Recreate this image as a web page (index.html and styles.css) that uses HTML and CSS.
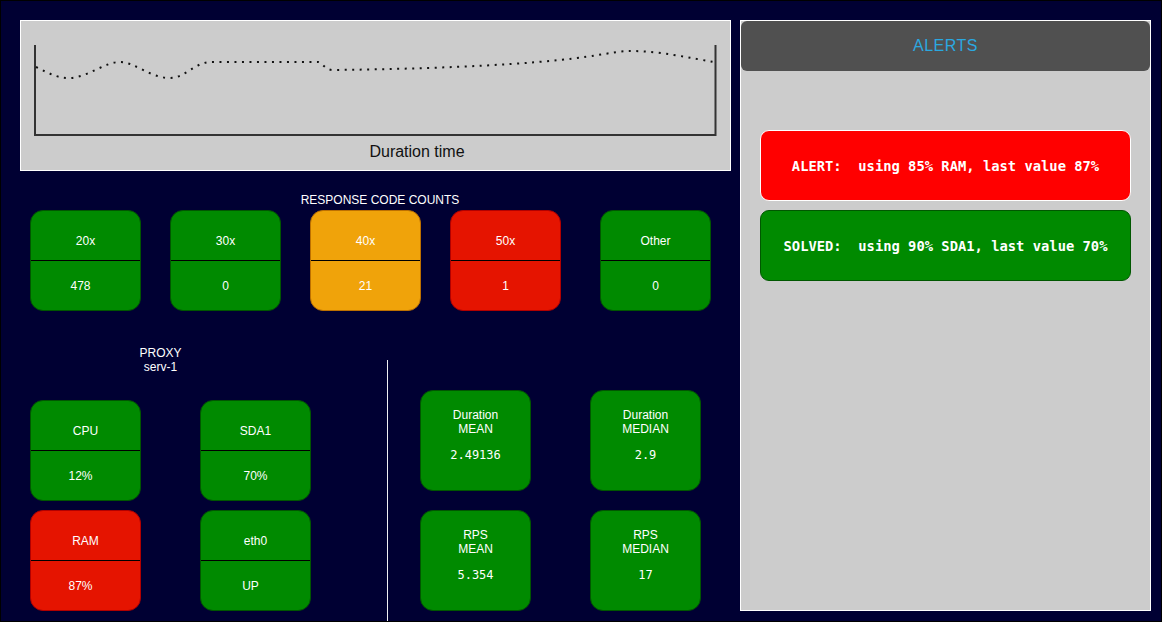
FILE: index.html
```html
<!DOCTYPE html>
<html>
<head>
<meta charset="utf-8">
<link rel="stylesheet" href="styles.css">
</head>
<body>
<div class="page">
  <div class="left">
    <div class="chart">
      <svg class="chart-svg" width="709" height="149" viewBox="21 21 709 149">
        <polyline points="35,45 35,135 715.5,135 715.5,45" fill="none" stroke="#333" stroke-width="2"/>
        <path d="M36,67 C50,74 60,79 71,78 C90,76 105,62 120,62 C135,62 150,78 170,78 C185,78 195,62 211,62 L318,62 C322,62 325,70 333,70 C420,69 500,66 560,60 C600,56 615,51 630,51 C660,51 690,58 714,62" fill="none" stroke="#111" stroke-width="2" stroke-dasharray="2 5.5"/>
        <text x="417" y="157" class="caption" text-anchor="middle">Duration time</text>
      </svg>
    </div>

    <div class="section-title">RESPONSE CODE COUNTS</div>
    <div class="codes">
      <div class="box green"><div class="top">20x</div><div class="bottom shift">478</div></div>
      <div class="box green"><div class="top">30x</div><div class="bottom">0</div></div>
      <div class="box orange"><div class="top">40x</div><div class="bottom">21</div></div>
      <div class="box red"><div class="top">50x</div><div class="bottom">1</div></div>
      <div class="box green other"><div class="top">Other</div><div class="bottom">0</div></div>
    </div>

    <div class="lower">
      <div class="proxy">
        <div class="proxy-title">PROXY<br>serv-1</div>
        <div class="proxy-grid">
          <div class="box green"><div class="top">CPU</div><div class="bottom shift">12%</div></div>
          <div class="box green"><div class="top">SDA1</div><div class="bottom">70%</div></div>
          <div class="box red"><div class="top">RAM</div><div class="bottom shift">87%</div></div>
          <div class="box green"><div class="top">eth0</div><div class="bottom shift">UP</div></div>
        </div>
      </div>
      <div class="vline"></div>
      <div class="metrics">
        <div class="metric green"><div class="m-label">Duration<br>MEAN</div><div class="m-value">2.49136</div></div>
        <div class="metric green"><div class="m-label">Duration<br>MEDIAN</div><div class="m-value">2.9</div></div>
        <div class="metric green"><div class="m-label">RPS<br>MEAN</div><div class="m-value">5.354</div></div>
        <div class="metric green"><div class="m-label">RPS<br>MEDIAN</div><div class="m-value">17</div></div>
      </div>
    </div>
  </div>

  <div class="right">
    <div class="alerts-head">ALERTS</div>
    <div class="alerts-list">
      <div class="alert alert-red">ALERT:&nbsp; using 85% RAM, last value 87%</div>
      <div class="alert alert-green">SOLVED:&nbsp; using 90% SDA1, last value 70%</div>
    </div>
  </div>
</div>
</body>
</html>
```

FILE: styles.css
```css
* { box-sizing: border-box; }
html, body { margin: 0; padding: 0; }
body {
  font-family: "Liberation Sans", Arial, sans-serif;
  background: #000033;
}
.page {
  width: 1162px;
  height: 622px;
  border: 1px solid #000;
  background: #000033;
  padding: 19px 0 0 19px;
  display: flex;
  overflow: hidden;
}
.left {
  width: 711px;
  display: flex;
  flex-direction: column;
}
.chart {
  width: 711px;
  height: 151px;
  border: 1px solid #fff;
  background: #cccccc;
}
.chart-svg { display: block; }
.caption {
  font-family: "Liberation Sans", Arial, sans-serif;
  font-size: 16px;
  fill: #111;
}
.section-title {
  margin-top: 22px;
  padding-left: 9px;
  text-align: center;
  color: #fff;
  font-size: 12px;
  line-height: 14px;
  height: 17px;
}
.codes {
  display: flex;
  gap: 29px;
  padding-left: 10px;
}
.codes .other { margin-left: 10px; }

.box {
  width: 111px;
  height: 101px;
  border-radius: 13px;
  border-width: 1px;
  border-style: solid;
  color: #fff;
  font-size: 12px;
  display: flex;
  flex-direction: column;
  overflow: hidden;
}
.box .top {
  height: 50px;
  border-bottom: 1px solid #000;
  padding-top: 10px;
  display: flex;
  align-items: center;
  justify-content: center;
}
.box .bottom {
  height: 49px;
  display: flex;
  align-items: center;
  justify-content: center;
}
.box .shift { padding-right: 10px; }

.lower {
  display: flex;
  flex: 1;
}
.proxy {
  width: 367px;
}
.proxy-title {
  width: 281px;
  margin-top: 35px;
  text-align: center;
  color: #fff;
  font-size: 12px;
  line-height: 14px;
}
.proxy-grid {
  margin-top: 26px;
  padding-left: 10px;
  display: grid;
  grid-template-columns: 111px 111px;
  column-gap: 59px;
  row-gap: 9px;
}
.vline {
  width: 1px;
  margin-top: 49px;
  background: #f0f0f4;
}
.metrics {
  margin-left: 32px;
  margin-top: 79px;
  display: grid;
  grid-template-columns: 111px 111px;
  grid-auto-rows: 101px;
  column-gap: 59px;
  row-gap: 19px;
  align-content: start;
}
.metric {
  border-width: 1px;
  border-style: solid;
  border-radius: 13px;
  color: #fff;
  text-align: center;
  padding-top: 17px;
}
.m-label {
  font-size: 12px;
  line-height: 14px;
}
.m-value {
  margin-top: 12px;
  font-family: "DejaVu Sans Mono", "Liberation Mono", monospace;
  font-size: 12px;
  line-height: 14px;
}

.green { background: #008a00; border-color: #005700; }
.orange { background: #f0a30a; border-color: #bd7000; }
.red { background: #e51400; border-color: #b20000; }

.right {
  margin-left: 9px;
  width: 411px;
  height: 591px;
  border: 1px solid #fff;
  background: #cccccc;
  display: flex;
  flex-direction: column;
}
.alerts-head {
  height: 50px;
  background: #505050;
  border-radius: 6px;
  color: #2ba8e0;
  font-size: 16px;
  letter-spacing: 0.5px;
  display: flex;
  align-items: center;
  justify-content: center;
}
.alerts-list {
  padding: 59px 19px 0 19px;
  display: flex;
  flex-direction: column;
  gap: 9px;
}
.alert {
  height: 71px;
  border-radius: 9px;
  border-width: 1px;
  border-style: solid;
  color: #fff;
  font-family: "DejaVu Sans Mono", "Liberation Mono", monospace;
  font-weight: bold;
  font-size: 13.8px;
  display: flex;
  align-items: center;
  justify-content: center;
  white-space: nowrap;
}
.alert-red { background: #ff0000; border-color: #fff; }
.alert-green { background: #008a00; border-color: #005700; }
```
